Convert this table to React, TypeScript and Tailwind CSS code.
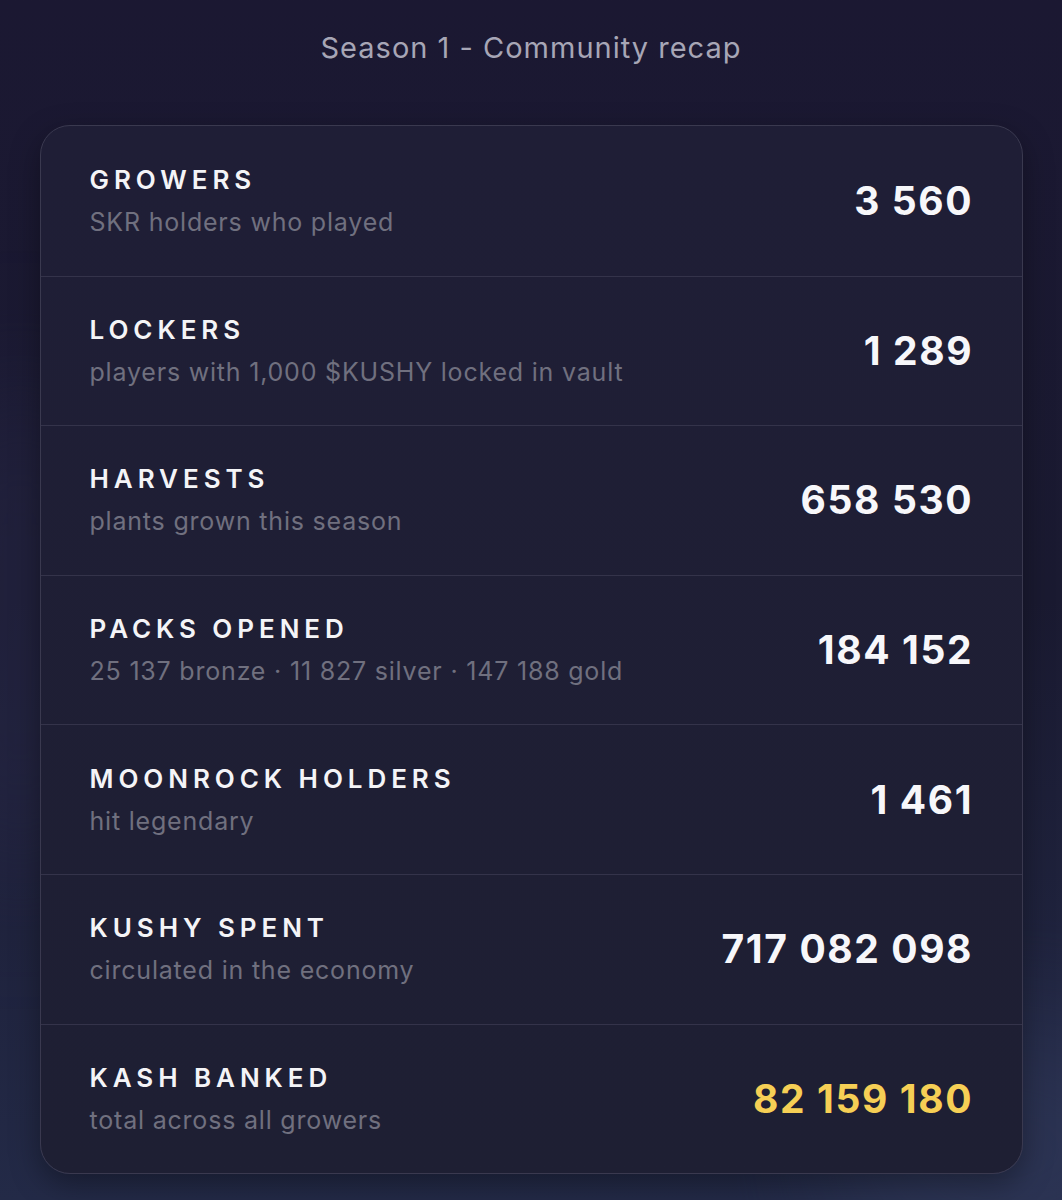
import React from 'react';

interface Stat {
  label: string;
  sub: string;
  value: string;
  gold?: boolean;
}

const stats: Stat[] = [
  { label: 'GROWERS', sub: 'SKR holders who played', value: '3 560' },
  { label: 'LOCKERS', sub: 'players with 1,000 $KUSHY locked in vault', value: '1 289' },
  { label: 'HARVESTS', sub: 'plants grown this season', value: '658 530' },
  { label: 'PACKS OPENED', sub: '25 137 bronze · 11 827 silver · 147 188 gold', value: '184 152' },
  { label: 'MOONROCK HOLDERS', sub: 'hit legendary', value: '1 461' },
  { label: 'KUSHY SPENT', sub: 'circulated in the economy', value: '717 082 098' },
  { label: 'KASH BANKED', sub: 'total across all growers', value: '82 159 180', gold: true },
];

export default function App() {
  return (
    <div className="relative w-[1062px] h-[1200px] overflow-hidden bg-gradient-to-b from-[#1b1832] via-[#1a1a31] to-[#232a47] font-['Inter','Noto_Sans',sans-serif]">
      {/* soft glows */}
      <div className="absolute right-[-120px] bottom-[-80px] w-[360px] h-[260px] rounded-full bg-[#3a4468] opacity-40 blur-3xl" />
      <div className="absolute left-[-60px] top-[380px] w-[160px] h-[500px] rounded-full bg-[#2a2a4a] opacity-50 blur-3xl" />

      <div className="relative flex flex-col items-center">
        {/* Title */}
        <h1 className="mt-[28px] text-[29px] leading-[40px] text-[#a7a6b6] tracking-[1px]">
          Season 1 - Community recap
        </h1>

        {/* Card */}
        <div className="mt-[57px] w-[983px] rounded-[30px] border border-[#3a394f] bg-gradient-to-b from-[#1f1e36] to-[#1e1f33] shadow-[0_10px_30px_rgba(0,0,0,0.35)] overflow-hidden">
          {stats.map((s, i) => (
            <div
              key={s.label}
              className={`flex items-center justify-between h-[149.6px] pl-[49px] pr-[50px] ${
                i > 0 ? 'border-t border-[#34334a]' : ''
              }`}
            >
              <div className="flex flex-col">
                <span className="text-[26px] leading-[30px] font-semibold tracking-[0.19em] text-[#f4f4f7]">
                  {s.label}
                </span>
                <span className="mt-[12px] text-[25px] leading-[30px] text-[#70707f] tracking-[0.8px]">
                  {s.sub}
                </span>
              </div>
              <span
                className={`text-[39px] leading-[44px] font-bold tracking-[1.6px] -mr-[1.6px] ${
                  s.gold ? 'text-[#f6cf55]' : 'text-[#f7f7fa]'
                }`}
              >
                {s.value}
              </span>
            </div>
          ))}
        </div>
      </div>
    </div>
  );
}
